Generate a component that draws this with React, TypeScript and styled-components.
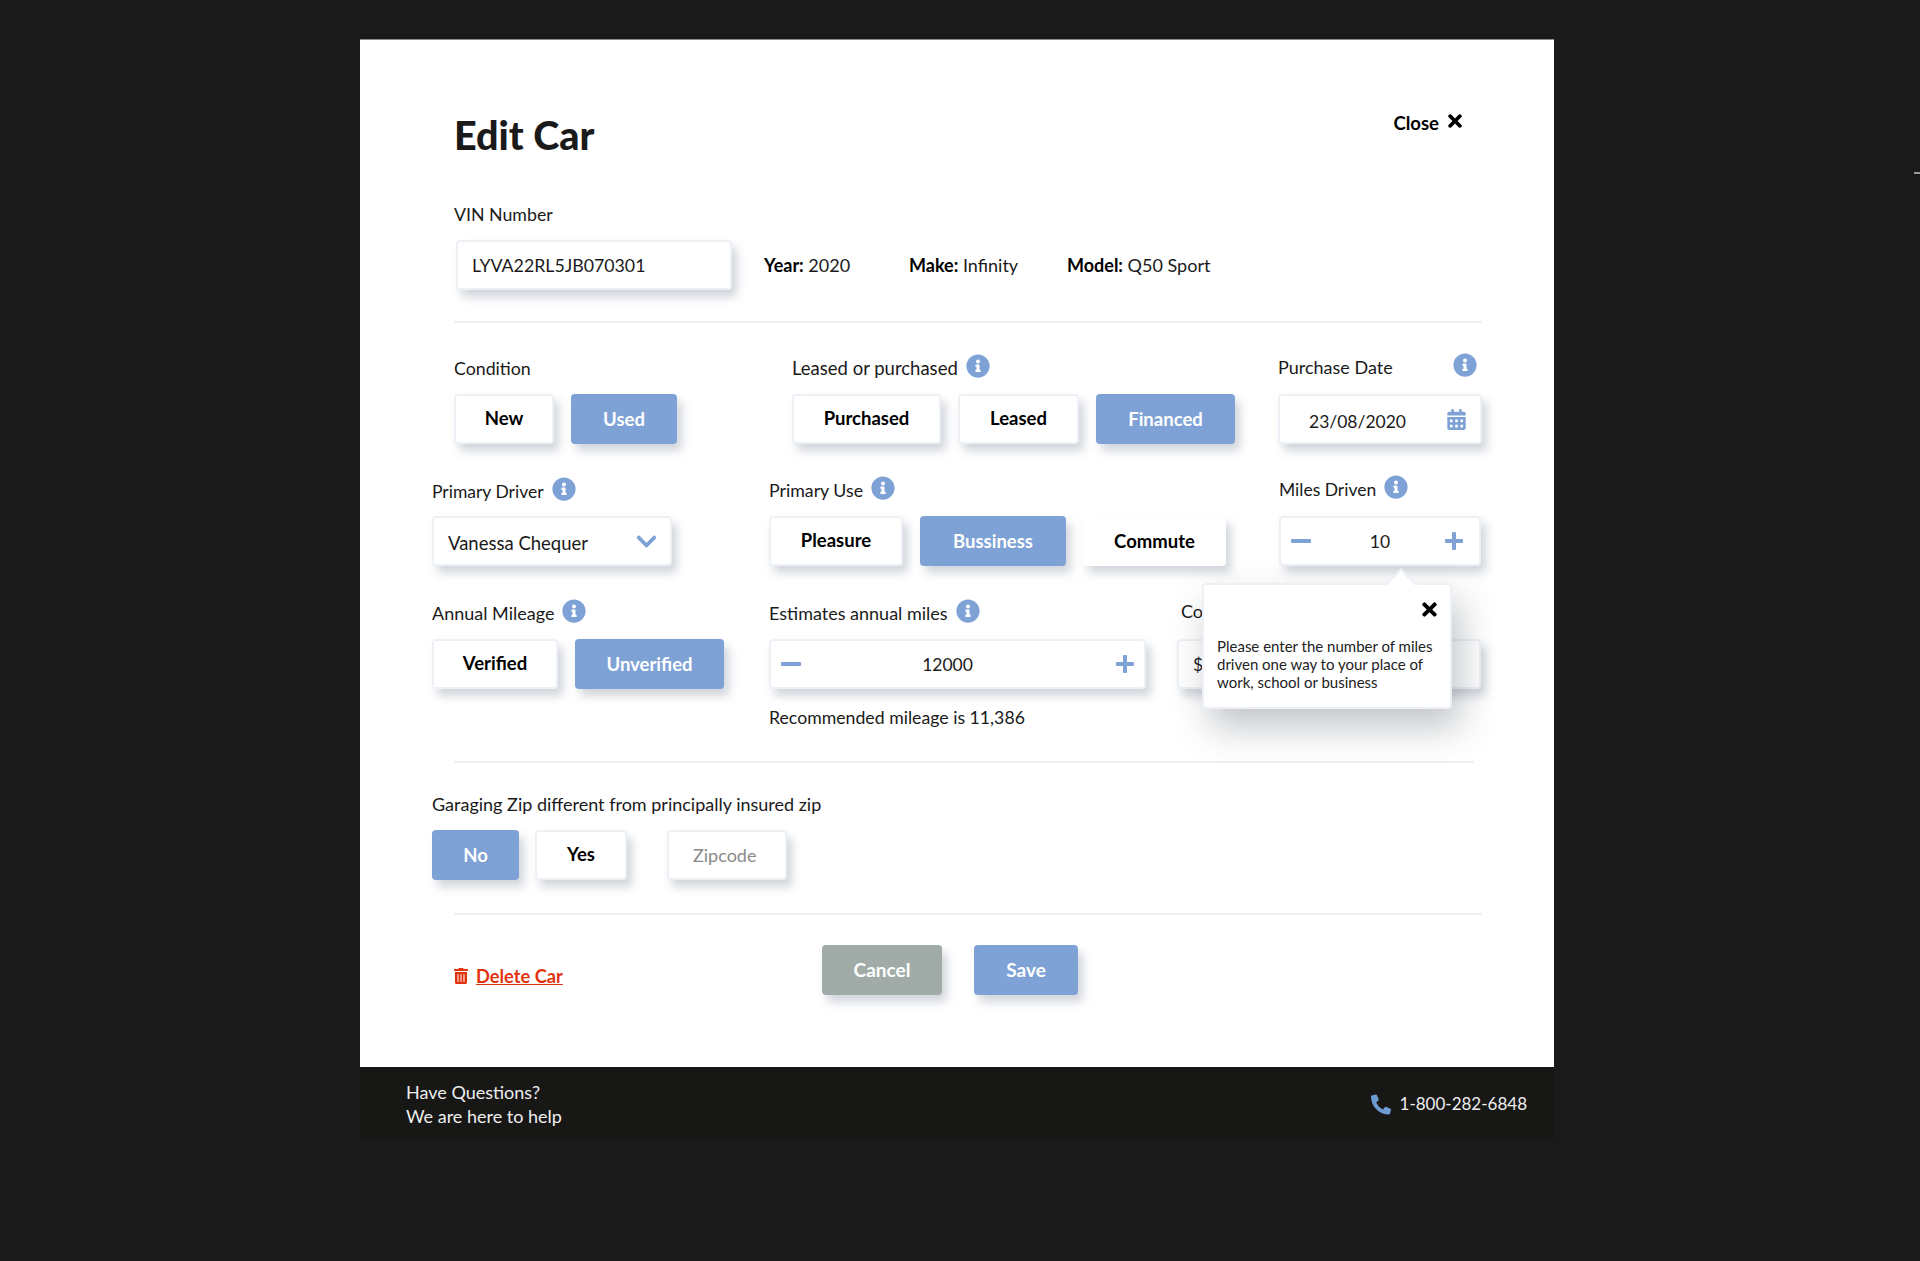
import styled, { createGlobalStyle } from "styled-components";
import {
  FaCalendarAlt,
  FaChevronDown,
  FaInfoCircle,
  FaPhoneAlt,
  FaTimes,
  FaTrashAlt,
} from "react-icons/fa";

const blue = "#7ea2d5";
const edge = "#edf1f6";
const lift = "5px 7px 10px rgba(90, 105, 125, 0.28)";

const GlobalStyle = createGlobalStyle`
  * {
    box-sizing: border-box;
  }
  html, body {
    margin: 0;
    background: #1a1a1a;
  }
  body {
    font-family: "Lato", "Liberation Sans", sans-serif;
    font-size: 17.5px;
    color: #1a1a1a;
  }
`;

const Page = styled.div`
  position: relative;
  height: 1261px;
  overflow: hidden;
  padding: 39px 366px 0 360px;
`;

const EdgeMark = styled.div`
  position: absolute;
  right: 0;
  top: 172px;
  width: 6px;
  height: 2px;
  background: #999;
`;

const Modal = styled.div`
  position: relative;
  height: 1028px;
  background: #fff;
  border-top: 1px solid #8d8d8d;
`;

const Header = styled.header`
  display: flex;
  justify-content: space-between;
  align-items: flex-start;
  padding: 72px 91px 0 94px;
`;

const Title = styled.h1`
  margin: 5px 0 0;
  font-size: 39.5px;
  line-height: 36px;
  font-weight: 900;
`;

const CloseLink = styled.div`
  display: flex;
  align-items: center;
  gap: 8px;
  font-size: 18.5px;
  font-weight: 700;
  line-height: 22px;
  color: #000;
  svg {
    width: 16px;
    height: 20px;
    margin-top: -4px;
  }
`;

const Label = styled.div<{ $nudge?: number; $size?: number; $indent?: number }>`
  display: flex;
  align-items: center;
  height: 20px;
  margin-top: ${(p) => p.$nudge ?? 0}px;
  margin-bottom: ${(p) => 16 - (p.$nudge ?? 0)}px;
  padding-left: ${(p) => p.$indent ?? 0}px;
  font-size: ${(p) => p.$size ?? 18}px;
  white-space: nowrap;
`;

const InfoIcon = styled(FaInfoCircle)<{ $gap?: number }>`
  width: 24px;
  height: 24px;
  margin-left: ${(p) => p.$gap ?? 8}px;
  margin-top: -4px;
  color: ${blue};
  flex: none;
`;

const VinSection = styled.section`
  margin-top: 51px;
  padding-left: 94px;
`;

const VinRow = styled.div`
  display: flex;
  align-items: center;
  padding-left: 2px;
`;

const Spec = styled.div<{ $width: number }>`
  width: ${(p) => p.$width}px;
  font-size: 18px;
  b {
    font-weight: 700;
    color: #000;
  }
`;

const Divider = styled.hr<{ $right?: number; $top: number }>`
  height: 2px;
  margin: ${(p) => p.$top}px ${(p) => p.$right ?? 72}px 0 94px;
  border: 0;
  background: ${edge};
`;

const Row = styled.div<{ $left: number; $top: number }>`
  display: flex;
  padding-left: ${(p) => p.$left}px;
  margin-top: ${(p) => p.$top}px;
`;

const Column = styled.div<{ $width: number }>`
  width: ${(p) => p.$width}px;
  flex: none;
`;

const Group = styled.div<{ $gap?: number }>`
  display: flex;
  gap: ${(p) => p.$gap ?? 17}px;
`;

const Choice = styled.button<{ $active?: boolean; $bare?: boolean; $width: number }>`
  width: ${(p) => p.$width}px;
  height: 50px;
  padding: 0 0 ${(p) => (p.$active || p.$bare ? 0 : 2)}px;
  border-radius: 4px;
  border: ${(p) => (p.$active ? "0" : `2px solid ${p.$bare ? "#fff" : edge}`)};
  background: ${(p) => (p.$active ? blue : "#fff")};
  color: ${(p) => (p.$active ? "#fff" : "#000")};
  box-shadow: ${lift};
  font-family: inherit;
  font-size: 18.5px;
  font-weight: 700;
`;

const Field = styled.input<{ $width: number }>`
  display: block;
  width: ${(p) => p.$width}px;
  height: 50px;
  padding: 0 14px;
  border: 2px solid ${edge};
  border-radius: 4px;
  background: #fff;
  color: #1a1a1a;
  box-shadow: ${lift};
  font-family: inherit;
  font-size: 17.75px;
  outline: none;
  &::placeholder {
    color: #8a8a8a;
  }
`;

const VinField = styled(Field)`
  margin-right: 32px;
`;

const ZipField = styled(Field)`
  margin-left: 24px;
  padding-left: 24px;
  font-size: 18px;
`;

const Box = styled.div<{ $width: number; $pad?: string }>`
  display: flex;
  align-items: center;
  justify-content: space-between;
  width: ${(p) => p.$width}px;
  height: 50px;
  padding: ${(p) => p.$pad ?? "0 12px"};
  border: 2px solid ${edge};
  border-radius: 4px;
  background: #fff;
  box-shadow: ${lift};
`;

const BoxText = styled.span<{ $drop?: number; $size?: number }>`
  padding-top: ${(p) => p.$drop ?? 0}px;
  font-size: ${(p) => p.$size ?? 17.5}px;
`;

const StepValue = styled.span<{ $trim?: number }>`
  margin-right: ${(p) => p.$trim ?? 0}px;
`;

const Hint = styled.div`
  margin-top: 19px;
  font-size: 17.7px;
  line-height: 20px;
  white-space: nowrap;
`;

const Actions = styled.div`
  display: flex;
  align-items: flex-start;
  margin-top: 30px;
  padding-left: 94px;
`;

const DeleteLink = styled.div`
  display: flex;
  align-items: center;
  gap: 8px;
  width: 368px;
  margin-top: 21px;
  color: #e2330f;
  font-size: 18.3px;
  font-weight: 700;
  line-height: 20px;
  span {
    text-decoration: underline;
  }
  svg {
    width: 14px;
    height: 16px;
  }
`;

const ActionButton = styled.button<{ $tone: string; $width: number }>`
  width: ${(p) => p.$width}px;
  height: 50px;
  margin-right: 32px;
  padding: 0 0 2px;
  border: 0;
  border-radius: 4px;
  background: ${(p) => p.$tone};
  color: #fff;
  box-shadow: ${lift};
  font-family: inherit;
  font-size: 19px;
  font-weight: 700;
`;

const Popover = styled.div`
  position: absolute;
  left: 842px;
  top: 543px;
  width: 250px;
  height: 126px;
  padding: 52px 10px 0 13px;
  border: 2px solid ${edge};
  border-radius: 4px;
  background: #fff;
  box-shadow: 8px 18px 36px rgba(50, 60, 70, 0.3);
  font-size: 15px;
  line-height: 18px;
  color: #222;
  &::before {
    content: "";
    position: absolute;
    left: 186px;
    top: -12px;
    width: 20px;
    height: 20px;
    background: #fff;
    border-top: 2px solid ${edge};
    border-left: 2px solid ${edge};
    transform: rotate(45deg);
  }
`;

const PopoverClose = styled(FaTimes)`
  position: absolute;
  right: 12px;
  top: 14px;
  width: 17px;
  height: 21px;
  color: #000;
`;

const ContactBar = styled.footer`
  display: flex;
  justify-content: space-between;
  align-items: center;
  height: 74px;
  padding: 0 27px 0 46px;
  background: #171716;
  color: #eee;
  font-size: 18px;
  line-height: 24px;
`;

const Phone = styled.div`
  display: flex;
  align-items: center;
  gap: 9px;
  font-size: 17px;
  svg {
    width: 20px;
    height: 21px;
    color: #6f9bd3;
    margin-top: 1px;
  }
`;

const MinusIcon = () => (
  <svg width="20" height="4" viewBox="0 0 20 4" aria-hidden="true">
    <rect width="20" height="4" rx="1" fill={blue} />
  </svg>
);

const PlusIcon = () => (
  <svg width="18" height="18" viewBox="0 0 18 18" aria-hidden="true">
    <rect y="7" width="18" height="4" rx="1" fill={blue} />
    <rect x="7" width="4" height="18" rx="1" fill={blue} />
  </svg>
);

const App = () => {
  return (
    <Page>
      <GlobalStyle />
      <EdgeMark />
      <Modal>
        <Header>
          <Title>Edit Car</Title>
          <CloseLink>
            Close <FaTimes />
          </CloseLink>
        </Header>

        <VinSection>
          <Label $size={17.75}>VIN Number</Label>
          <VinRow>
            <VinField $width={276} defaultValue="LYVA22RL5JB070301" readOnly />
            <Spec $width={145}>
              <b>Year:</b> 2020
            </Spec>
            <Spec $width={158}>
              <b>Make:</b> Infinity
            </Spec>
            <Spec $width={170}>
              <b>Model:</b> Q50 Sport
            </Spec>
          </VinRow>
        </VinSection>

        <Divider $top={31} />

        <Row $left={94} $top={35}>
          <Column $width={338}>
            <Label $size={17.75}>Condition</Label>
            <Group>
              <Choice $width={100}>New</Choice>
              <Choice $width={106} $active>
                Used
              </Choice>
            </Group>
          </Column>
          <Column $width={486}>
            <Label $size={18.5}>
              Leased or purchased
              <InfoIcon />
            </Label>
            <Group>
              <Choice $width={149}>Purchased</Choice>
              <Choice $width={121}>Leased</Choice>
              <Choice $width={139} $active>
                Financed
              </Choice>
            </Group>
          </Column>
          <Column $width={204}>
            <Label $nudge={-1}>
              Purchase Date
              <InfoIcon $gap={60} />
            </Label>
            <Box $width={204} $pad="0 13px 0 29px">
              <BoxText $drop={4}>23/08/2020</BoxText>
              <FaCalendarAlt size={21} color={blue} />
            </Box>
          </Column>
        </Row>

        <Row $left={72} $top={36}>
          <Column $width={337}>
            <Label $size={17.5} $nudge={1}>
              Primary Driver
              <InfoIcon />
            </Label>
            <Box $width={240} $pad="0 12px 0 14px">
              <BoxText $drop={3} $size={18.5}>
                Vanessa Chequer
              </BoxText>
              <FaChevronDown size={23} color={blue} />
            </Box>
          </Column>
          <Column $width={510}>
            <Label $size={17.75}>
              Primary Use
              <InfoIcon />
            </Label>
            <Group>
              <Choice $width={134}>Pleasure</Choice>
              <Choice $width={146} $active>
                Bussiness
              </Choice>
              <Choice $width={143} $bare>
                Commute
              </Choice>
            </Group>
          </Column>
          <Column $width={202}>
            <Label $nudge={-1} $size={17.5}>
              Miles Driven
              <InfoIcon />
            </Label>
            <Box $width={202} $pad="0 16px 0 10px">
              <MinusIcon />
              <StepValue $trim={-4}>10</StepValue>
              <PlusIcon />
            </Box>
          </Column>
        </Row>

        <Row $left={72} $top={37}>
          <Column $width={337}>
            <Label>
              Annual Mileage
              <InfoIcon />
            </Label>
            <Group>
              <Choice $width={126}>Verified</Choice>
              <Choice $width={149} $active>
                Unverified
              </Choice>
            </Group>
          </Column>
          <Column $width={408}>
            <Label>
              Estimates annual miles
              <InfoIcon />
            </Label>
            <Box $width={377} $pad="0 10px">
              <MinusIcon />
              <StepValue $trim={22}>12000</StepValue>
              <PlusIcon />
            </Box>
            <Hint>Recommended mileage is 11,386</Hint>
          </Column>
          <Column $width={304}>
            <Label $nudge={-2} $indent={4}>
              Cost
            </Label>
            <Box $width={304} $pad="0 14px">
              <span>$</span>
            </Box>
          </Column>
        </Row>

        <Divider $top={33} $right={80} />

        <Row $left={72} $top={31}>
          <Column $width={600}>
            <Label>Garaging Zip different from principally insured zip</Label>
            <Group $gap={16}>
              <Choice $width={87} $active>
                No
              </Choice>
              <Choice $width={92}>Yes</Choice>
              <ZipField $width={120} placeholder="Zipcode" readOnly />
            </Group>
          </Column>
        </Row>

        <Divider $top={33} />

        <Actions>
          <DeleteLink>
            <FaTrashAlt />
            <span>Delete Car</span>
          </DeleteLink>
          <ActionButton $tone="#a1aca9" $width={120}>
            Cancel
          </ActionButton>
          <ActionButton $tone={blue} $width={104}>
            Save
          </ActionButton>
        </Actions>

        <Popover>
          <PopoverClose />
          Please enter the number of miles driven one way to your place of work, school or business
        </Popover>
      </Modal>

      <ContactBar>
        <div>
          Have Questions?
          <br />
          We are here to help
        </div>
        <Phone>
          <FaPhoneAlt />
          1-800-282-6848
        </Phone>
      </ContactBar>
    </Page>
  );
};

export default App;
